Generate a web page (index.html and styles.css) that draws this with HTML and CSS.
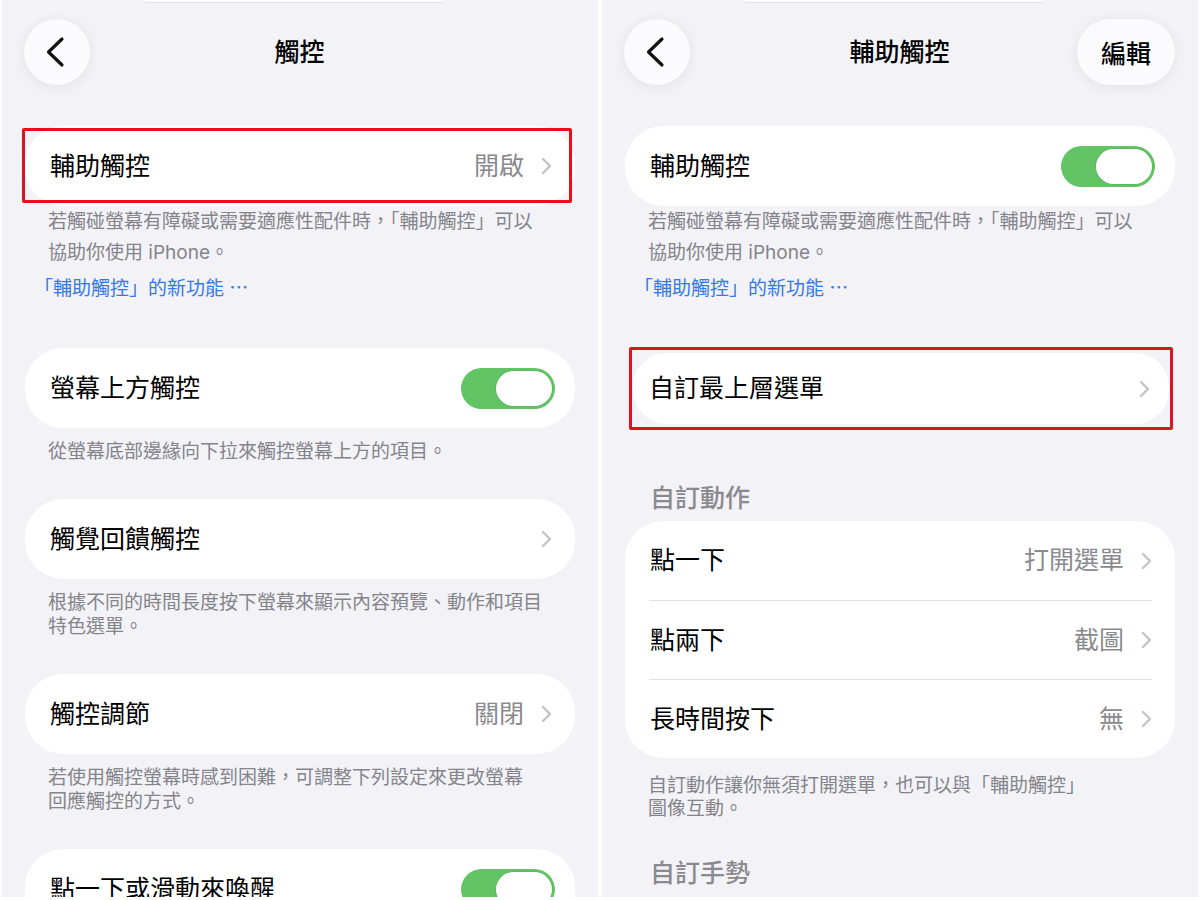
FILE: index.html
```html
<!DOCTYPE html>
<html lang="zh-Hant">
<head>
<meta charset="utf-8">
<title>觸控 / 輔助觸控</title>
<link rel="stylesheet" href="styles.css">
</head>
<body>
<div class="screens">
  <section class="panel">
    <div class="top-edge"></div>
    <header class="nav">
      <button class="circle-btn" aria-label="返回">
        <svg width="66" height="66" viewBox="0 0 66 66"><path d="M38 20 L24.5 33 L38 46" fill="none" stroke="#111" stroke-width="3.2" stroke-linecap="round" stroke-linejoin="round"/></svg>
      </button>
      <h1 class="nav-title">觸控</h1>
      <span></span>
    </header>
    <div class="content">
      <div class="card annotated first">
        <div class="row">
          <span class="label">輔助觸控</span>
          <span class="value">開啟</span>
          <svg class="chev" width="11" height="18" viewBox="0 0 11 18"><path d="M2 2 L9 9 L2 16" fill="none" stroke="#c4c4c8" stroke-width="2.4" stroke-linecap="round" stroke-linejoin="round"/></svg>
        </div>
        <span class="redbox"></span>
      </div>
      <p class="note note-first">若觸碰螢幕有障礙或需要適應性配件時，「輔助觸控」可以<br>協助你使用 iPhone。</p>
      <a class="note-link">「輔助觸控」的新功能 ⋯</a>

      <div class="card after-link">
        <div class="row">
          <span class="label">螢幕上方觸控</span>
          <span class="switch"><span class="knob"></span></span>
        </div>
      </div>
      <p class="note">從螢幕底部邊緣向下拉來觸控螢幕上方的項目。</p>

      <div class="card section-gap">
        <div class="row">
          <span class="label">觸覺回饋觸控</span>
          <svg class="chev" width="11" height="18" viewBox="0 0 11 18"><path d="M2 2 L9 9 L2 16" fill="none" stroke="#c4c4c8" stroke-width="2.4" stroke-linecap="round" stroke-linejoin="round"/></svg>
        </div>
      </div>
      <p class="note">根據不同的時間長度按下螢幕來顯示內容預覽、動作和項目<br>特色選單。</p>

      <div class="card section-gap">
        <div class="row">
          <span class="label">觸控調節</span>
          <span class="value">關閉</span>
          <svg class="chev" width="11" height="18" viewBox="0 0 11 18"><path d="M2 2 L9 9 L2 16" fill="none" stroke="#c4c4c8" stroke-width="2.4" stroke-linecap="round" stroke-linejoin="round"/></svg>
        </div>
      </div>
      <p class="note">若使用觸控螢幕時感到困難，可調整下列設定來更改螢幕<br>回應觸控的方式。</p>

      <div class="card section-gap">
        <div class="row">
          <span class="label">點一下或滑動來喚醒</span>
          <span class="switch"><span class="knob"></span></span>
        </div>
      </div>
    </div>
  </section>

  <section class="panel">
    <div class="top-edge"></div>
    <header class="nav">
      <button class="circle-btn" aria-label="返回">
        <svg width="66" height="66" viewBox="0 0 66 66"><path d="M38 20 L24.5 33 L38 46" fill="none" stroke="#111" stroke-width="3.2" stroke-linecap="round" stroke-linejoin="round"/></svg>
      </button>
      <h1 class="nav-title">輔助觸控</h1>
      <button class="pill-btn">編輯</button>
    </header>
    <div class="content">
      <div class="card first">
        <div class="row">
          <span class="label">輔助觸控</span>
          <span class="switch"><span class="knob"></span></span>
        </div>
      </div>
      <p class="note note-first">若觸碰螢幕有障礙或需要適應性配件時，「輔助觸控」可以<br>協助你使用 iPhone。</p>
      <a class="note-link">「輔助觸控」的新功能 ⋯</a>

      <div class="redframe">
        <div class="card">
          <div class="row row-pressed">
            <span class="label">自訂最上層選單</span>
            <svg class="chev" width="11" height="18" viewBox="0 0 11 18"><path d="M2 2 L9 9 L2 16" fill="none" stroke="#c4c4c8" stroke-width="2.4" stroke-linecap="round" stroke-linejoin="round"/></svg>
          </div>
        </div>
      </div>

      <h2 class="section-head">自訂動作</h2>
      <div class="card group">
        <div class="row row-a">
          <span class="label">點一下</span>
          <span class="value">打開選單</span>
          <svg class="chev" width="11" height="18" viewBox="0 0 11 18"><path d="M2 2 L9 9 L2 16" fill="none" stroke="#c4c4c8" stroke-width="2.4" stroke-linecap="round" stroke-linejoin="round"/></svg>
        </div>
        <div class="sep"></div>
        <div class="row row-b">
          <span class="label">點兩下</span>
          <span class="value">截圖</span>
          <svg class="chev" width="11" height="18" viewBox="0 0 11 18"><path d="M2 2 L9 9 L2 16" fill="none" stroke="#c4c4c8" stroke-width="2.4" stroke-linecap="round" stroke-linejoin="round"/></svg>
        </div>
        <div class="sep"></div>
        <div class="row row-b">
          <span class="label">長時間按下</span>
          <span class="value">無</span>
          <svg class="chev" width="11" height="18" viewBox="0 0 11 18"><path d="M2 2 L9 9 L2 16" fill="none" stroke="#c4c4c8" stroke-width="2.4" stroke-linecap="round" stroke-linejoin="round"/></svg>
        </div>
      </div>
      <p class="note note-tight">自訂動作讓你無須打開選單，也可以與「輔助觸控」<br>圖像互動。</p>

      <h2 class="section-head section-head-2">自訂手勢</h2>
      <div class="card next-group"><div class="row"></div></div>
    </div>
  </section>
</div>
</body>
</html>
```

FILE: styles.css
```css
* {
  box-sizing: border-box;
  margin: 0;
  padding: 0;
}

html, body {
  width: 1200px;
  height: 900px;
  overflow: hidden;
  background: #ffffff;
}

body {
  font-family: "Inter", "Noto Sans CJK TC", sans-serif;
  color: #000;
}

.screens {
  display: flex;
  gap: 4px;
  padding: 0 2px;
  height: 897px;
}

.panel {
  flex: 1;
  background: #f2f2f7;
  overflow: hidden;
  display: flex;
  flex-direction: column;
}

.top-edge {
  flex: none;
  width: 301px;
  height: 3px;
  margin-left: 141px;
  background: #fbfbfd;
  border-bottom: 1px solid #e2e2e7;
  border-radius: 0 0 3px 3px;
}

.nav {
  flex: none;
  display: grid;
  grid-template-columns: 1fr auto 1fr;
  align-items: center;
  padding: 16px 23px 0 22px;
}

.circle-btn {
  width: 66px;
  height: 66px;
  border: none;
  border-radius: 50%;
  background: #fbfbfd;
  box-shadow: 0 2px 14px rgba(0, 0, 0, 0.07);
  display: flex;
  align-items: center;
  justify-content: center;
}

.nav-title {
  font-size: 25px;
  font-weight: 500;
  line-height: 66px;
  text-align: center;
}

.pill-btn {
  justify-self: end;
  width: 98px;
  height: 66px;
  border: none;
  border-radius: 33px;
  background: #fbfbfd;
  box-shadow: 0 2px 14px rgba(0, 0, 0, 0.07);
  font-family: "Inter", "Noto Sans CJK TC", sans-serif;
  font-size: 25px;
  font-weight: 500;
  color: #000;
}

.content {
  flex: none;
  padding: 0 23px;
}

.card {
  background: #ffffff;
  border-radius: 38px;
}

.card.first {
  margin-top: 41px;
}

.row {
  display: flex;
  align-items: center;
  height: 80px;
  padding: 0 20px 0 25px;
  font-size: 25px;
  line-height: 1;
}

.label {
  flex: 1;
  white-space: nowrap;
}

.value {
  color: #8a8a8e;
  white-space: nowrap;
}

.chev {
  flex: none;
  margin: 0 3px 0 17px;
}

.switch {
  flex: none;
  width: 94px;
  height: 41px;
  border-radius: 21px;
  background: #63c466;
  display: flex;
  align-items: center;
  justify-content: flex-end;
  padding: 0 3px;
}

.knob {
  width: 56px;
  height: 35px;
  border-radius: 18px;
  background: #ffffff;
  box-shadow: 0 0 0 1px rgba(70, 165, 75, 0.35);
}

.annotated {
  position: relative;
}

.redbox {
  position: absolute;
  left: -3px;
  top: 2px;
  width: 550px;
  height: 75px;
  border: 3px solid #e3111b;
  border-radius: 2px;
}

.note {
  font-size: 19px;
  line-height: 24px;
  color: #84848a;
  padding: 0 20px 0 23px;
  margin-top: 12px;
  white-space: nowrap;
}

.note-first {
  line-height: 31px;
  margin-top: 0;
}

.note-tight {
  line-height: 23px;
  margin-top: 16px;
}

.note-link {
  display: block;
  font-size: 19px;
  line-height: 26px;
  color: #3479e8;
  margin-top: 8px;
  padding-left: 9px;
}

.after-link {
  margin-top: 46px;
}

.section-gap {
  margin-top: 35px;
}

.redframe {
  margin: 45px 2px 0 4px;
  border: 3px solid #e3111b;
  border-radius: 2px;
  padding: 3px 1px;
}

.redframe .card {
  border-radius: 34px;
}

.row-pressed {
  height: 71px;
  padding: 0 16px 0 16px;
}

.section-head {
  font-size: 25px;
  font-weight: 500;
  line-height: 30px;
  color: #8a8a8e;
  padding-left: 25px;
  margin-top: 53px;
}

.section-head-2 {
  margin-top: 38px;
}

.group {
  margin-top: 8px;
}

.row-a {
  height: 79px;
}

.row-b {
  height: 78px;
}

.sep {
  height: 1px;
  background: #e3e3e6;
  margin: 0 23px 0 24px;
}

.next-group {
  margin-top: 9px;
}
```
